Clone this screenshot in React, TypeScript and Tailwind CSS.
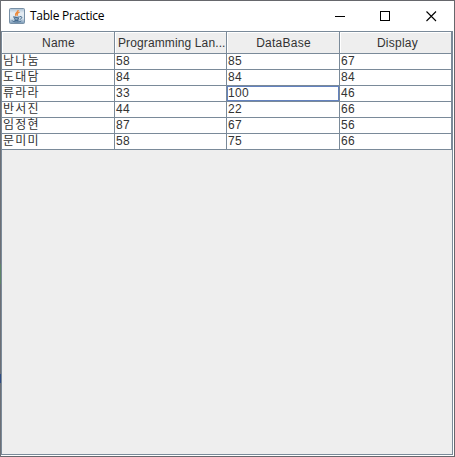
const columns = [
  { label: 'Name', head: 'tracking-[0.25px] justify-center', width: 'w-[113px]' },
  { label: 'Programming Lan...', head: 'tracking-[0.12px] pl-[2px]', width: 'w-[112px]' },
  { label: 'DataBase', head: 'tracking-[0.25px] justify-center', width: 'w-[113px]' },
  { label: 'Display', head: 'tracking-[0.25px] justify-center pl-[3px]', width: 'w-[112px]' },
];

const rows = [
  ['남나눔', '58', '85', '67'],
  ['도대담', '84', '84', '84'],
  ['류라라', '33', '100', '46'],
  ['반서진', '44', '22', '66'],
  ['임정현', '87', '67', '56'],
  ['문미미', '58', '75', '66'],
];

function JavaIcon() {
  return (
    <svg width="16" height="16" viewBox="0 0 16 16" fill="none">
      <defs>
        <linearGradient id="tile" x1="0" y1="0" x2="0" y2="1">
          <stop offset="0" stopColor="#a9c0d3" />
          <stop offset="0.3" stopColor="#e6edf3" />
          <stop offset="0.65" stopColor="#dbe6ee" />
          <stop offset="1" stopColor="#7596b5" />
        </linearGradient>
      </defs>
      <rect x="0.5" y="0.5" width="15" height="15" rx="1" fill="url(#tile)" stroke="#7890a6" />
      <path d="M9.2 2C9.6 4.2 4.8 4.8 7.2 8M10.6 4.2C8.2 5 7.6 6 8.8 7.6" stroke="#ec8a3c" strokeWidth="1.3" />
      <path d="M4.2 8.8C5.5 9.6 9 9.5 10.6 8.8M5 10.5C6.5 11.1 8.8 11.1 10 10.6M5.4 12C6.5 12.5 8.5 12.5 9.6 12" stroke="#42688c" strokeWidth="1.1" />
      <path d="M3.2 12.4C2.6 14.2 11.5 14.4 12.3 12.9M10.8 8.7C13.6 7.8 13.4 10.8 10.8 11.3" stroke="#42688c" strokeWidth="1" />
    </svg>
  );
}

function TitleBar() {
  return (
    <div className="flex h-[30px] items-center bg-white pl-2">
      <JavaIcon />
      <span className="ml-[5px] grow whitespace-nowrap font-['Open_Sans','Noto_Sans',sans-serif] text-[12px] leading-[16px] tracking-[-0.25px] text-black">
        Table Practice
      </span>
      <svg width="102" height="11" viewBox="0 0 102 11" className="mr-[17px] shrink-0" fill="none" stroke="#000">
        <path d="M0 5.5H10" shapeRendering="crispEdges" />
        <path d="M45.5 0.5H54.5V9.5H45.5Z" shapeRendering="crispEdges" />
        <path d="M91.5 0.5L101 10M101 0.5L91.5 10" strokeWidth="1.1" />
      </svg>
    </div>
  );
}

/* Slivers of the desktop that show along the window's left edge. */
function LeftEdge() {
  return (
    <div className="flex w-px shrink-0 flex-col bg-[#6c6f75]">
      <div className="mt-[264px] h-[20px] bg-[#5f8466]" />
      <div className="mt-[90px] h-[9px] bg-[#2f4c82]" />
    </div>
  );
}

export default function App() {
  return (
    <div className="flex h-[457px] w-[455px] overflow-hidden bg-white font-['Liberation_Sans','Noto_Sans_CJK_KR',sans-serif] text-[12px] text-[#333333]">
      <LeftEdge />
      <div className="w-[454px] shrink-0 border-y border-r border-[#66676c]">
        <TitleBar />
        <div className="h-[424px] w-[452px] border border-[#7a8a99] bg-[#eeeeee]">
          <div className="flex h-[22px]">
            {columns.map((c) => (
              <div key={c.label} className={`${c.width} shrink-0 border-r border-b border-[#7a8a99]`}>
                <div
                  className={`${c.head} flex h-full items-center overflow-hidden border-t border-l border-white whitespace-nowrap leading-[14px]`}
                >
                  {c.label}
                </div>
              </div>
            ))}
          </div>
          {rows.map((row, r) => (
            <div key={row[0]} className="flex h-4">
              {row.map((value, i) => (
                <div key={i} className={`${columns[i].width} shrink-0 border-r border-b border-[#7a8a99] bg-white`}>
                  <div
                    className={`h-[15px] border leading-[13px] ${
                      r === 2 && i === 2 ? 'border-[#6382bf]' : 'border-transparent'
                    } ${i === 0 ? 'tracking-[1.2px]' : 'tracking-[0.33px]'}`}
                  >
                    {value}
                  </div>
                </div>
              ))}
            </div>
          ))}
        </div>
      </div>
    </div>
  );
}
